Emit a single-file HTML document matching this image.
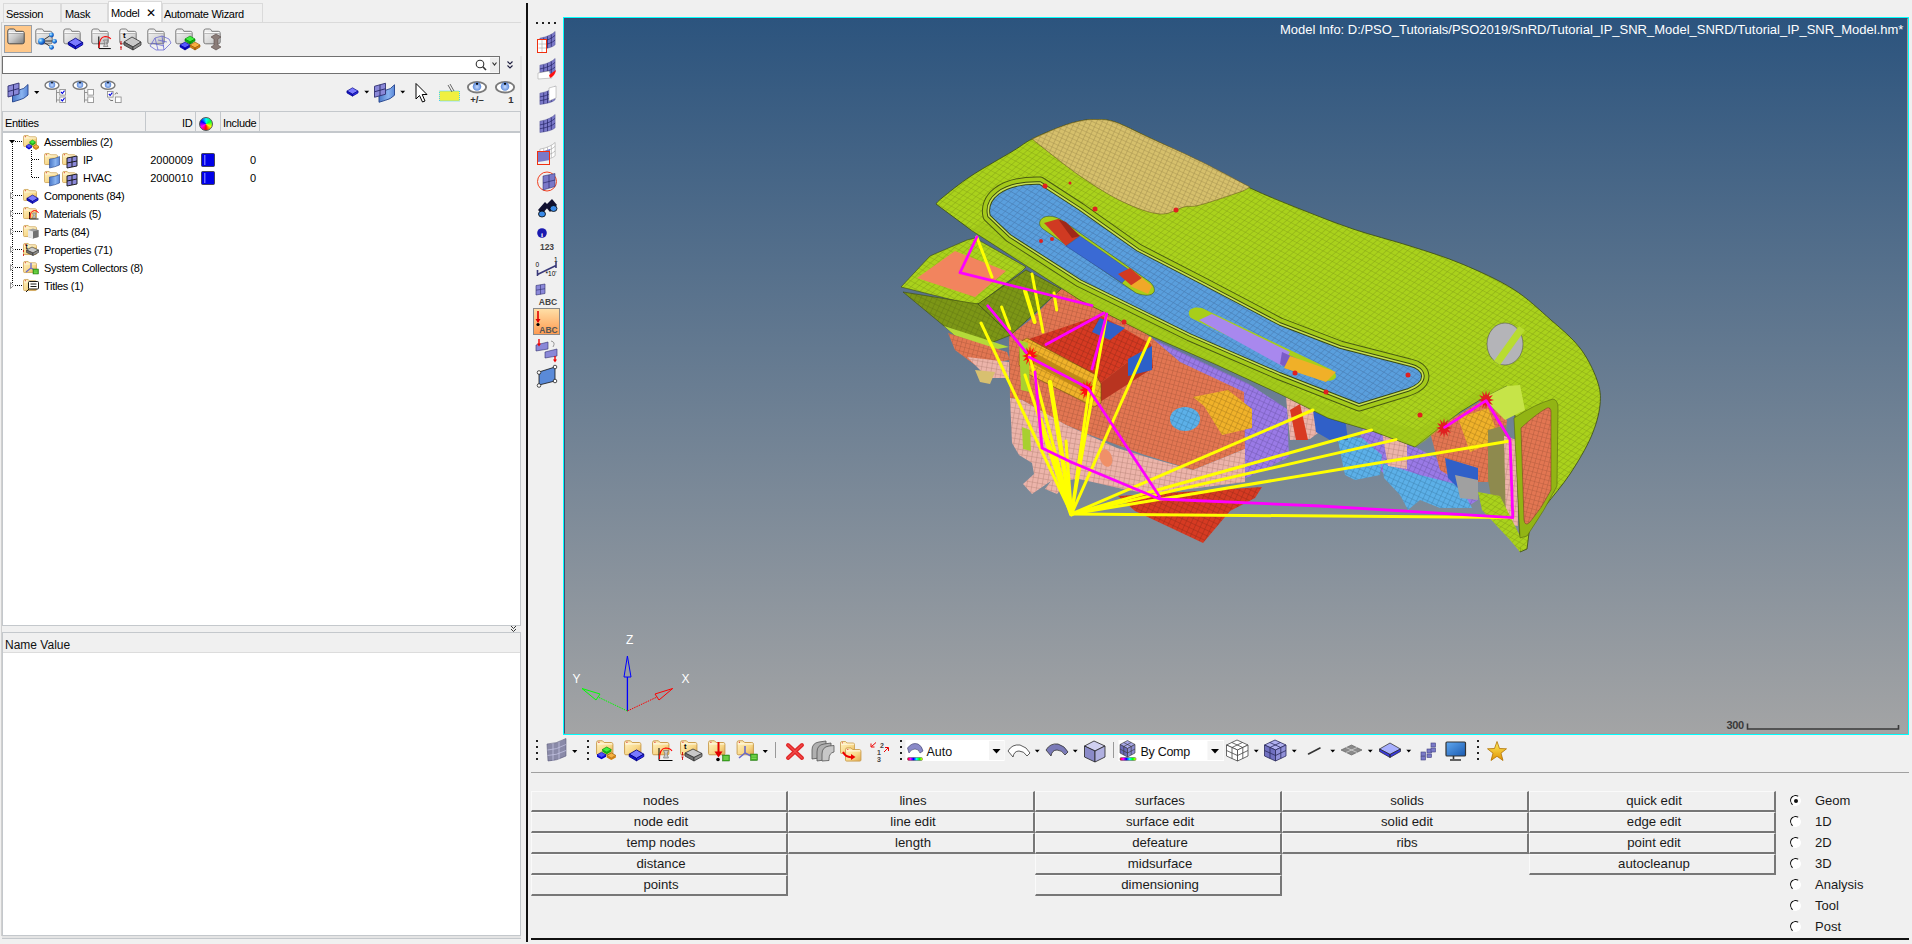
<!DOCTYPE html>
<html><head><meta charset="utf-8">
<style>
*{box-sizing:border-box;margin:0;padding:0}
html,body{width:1912px;height:944px;overflow:hidden;background:#f0f0f0;font-family:"Liberation Sans",sans-serif;font-size:11px;color:#000}
.a{position:absolute}
.tab{position:absolute;top:3px;height:19px;border:1px solid #dadada;border-bottom:none;background:#f0f0f0;font-size:11px;letter-spacing:-0.3px;padding:4px 0 0 5px;line-height:13px;white-space:nowrap;color:#000}
.t{position:absolute;font-size:11px;line-height:13px;white-space:nowrap;letter-spacing:-0.3px;color:#000}
.n{position:absolute;font-size:11px;line-height:13px;white-space:nowrap;color:#000;text-align:right}
.btn{position:absolute;height:21px;background:#f0f0f0;border-top:1px solid #fafafa;border-left:1px solid #fafafa;border-right:2px solid #777;border-bottom:2px solid #777;text-align:center;font-size:13.2px;line-height:17px;color:#1a1a1a;white-space:nowrap;padding-left:4px}
.rad{position:absolute;left:1790px;width:11px;height:11px;border-radius:50%;background:#fff;border:1.5px solid #fff;border-left-color:#111;border-top-color:#111;transform:rotate(-10deg)}
.rl{position:absolute;left:1815px;font-size:13px;line-height:16px;color:#1a1a1a}
</style></head><body>
<div class="tab" style="left:3px;width:58px;padding-left:2px">Session</div>
<div class="tab" style="left:61px;width:47px;padding-left:3px">Mask</div>
<div class="tab" style="left:108px;width:54px;top:1px;height:21px;background:#fff;padding-top:5px;padding-left:2px">Model <span style="margin-left:4px;font-size:12px">&#x2715;</span></div>
<div class="tab" style="left:162px;width:101px;padding-left:1px">Automate Wizard</div>
<div class="a" style="left:1px;top:22px;width:520px;height:1px;background:#dadada"></div>
<div class="a" style="left:1px;top:22px;width:1px;height:914px;background:#d0d0d0"></div>

<!-- search box -->
<div class="a" style="left:2px;top:56px;width:498px;height:18px;background:#fff;border:1px solid #707070"></div>

<!-- entity header -->
<div class="a" style="left:2px;top:111px;width:519px;height:22px;background:#f0f0f0;border:1px solid #c4c8cc;border-bottom:2px solid #c4c8cc"></div>
<div class="t" style="left:5px;top:117px">Entities</div>
<div class="a" style="left:145px;top:112px;width:1px;height:20px;background:#c4c8cc"></div>
<div class="a" style="left:195px;top:112px;width:1px;height:20px;background:#c4c8cc"></div>
<div class="a" style="left:220px;top:112px;width:1px;height:20px;background:#c4c8cc"></div>
<div class="a" style="left:259px;top:112px;width:1px;height:20px;background:#c4c8cc"></div>
<div class="t" style="left:182px;top:117px">ID</div>
<div class="t" style="left:223px;top:117px">Include</div><div class="a" style="left:199px;top:117px;width:14px;height:14px;border-radius:50%;background:conic-gradient(#00ffff,#00ff40,#ffff00,#ff0000,#ff00ff,#0000ff,#00ffff);border:1px solid #555"></div>

<div class="a" style="left:2px;top:133px;width:519px;height:492px;background:#fff;border-left:1px solid #c4c8cc;border-right:1px solid #c4c8cc"></div>
<div class="t" style="left:44px;top:136px">Assemblies (2)</div>
<div class="t" style="left:83px;top:154px">IP</div>
<div class="t" style="left:83px;top:172px">HVAC</div>
<div class="t" style="left:44px;top:190px">Components (84)</div>
<div class="t" style="left:44px;top:208px">Materials (5)</div>
<div class="t" style="left:44px;top:226px">Parts (84)</div>
<div class="t" style="left:44px;top:244px">Properties (71)</div>
<div class="t" style="left:44px;top:262px">System Collectors (8)</div>
<div class="t" style="left:44px;top:280px">Titles (1)</div>
<div class="n" style="left:140px;width:53px;top:154px">2000009</div>
<div class="n" style="left:140px;width:53px;top:172px">2000010</div>
<div class="n" style="left:230px;width:26px;top:154px">0</div>
<div class="n" style="left:230px;width:26px;top:172px">0</div>

<!-- splitter -->
<div class="a" style="left:2px;top:625px;width:519px;height:1px;background:#c4c8cc"></div>
<div class="a" style="left:2px;top:632px;width:519px;height:1px;background:#c4c8cc"></div>
<!-- name value -->
<div class="a" style="left:2px;top:633px;width:519px;height:303px;background:#fff;border:1px solid #c4c8cc;border-top:none"></div>
<div class="a" style="left:3px;top:633px;width:517px;height:20px;background:#f0f0f0;border-bottom:1px solid #dcdcdc"></div>
<div class="a" style="left:5px;top:638px;font-size:12px;line-height:14px;color:#111">Name Value</div>
<div class="a" style="left:2px;top:936px;width:519px;height:3px;background:#e4e4e4;border-bottom:1px solid #c4c8cc"></div>

<!-- divider -->
<div class="a" style="left:526px;top:3px;width:2px;height:939px;background:#111"></div>

<!-- viewport -->
<div class="a" style="left:563px;top:17px;width:1346px;height:718px;background:#00ffff"></div>
<div class="a" style="left:564px;top:18px;width:1344px;height:716px;background:linear-gradient(#2c547e,#a3a4a5);border-top:1px solid #3a4a72;border-left:1px solid #3a4a72;border-right:1px solid #a89a9a;border-bottom:1px solid #a89a9a"></div>
<div class="a" style="left:1280px;top:22px;color:#fff;font-size:13px;line-height:16px;white-space:nowrap;letter-spacing:-0.01px">Model Info: D:/PSO_Tutorials/PSO2019/SnRD/Tutorial_IP_SNR_Model_SNRD/Tutorial_IP_SNR_Model.hm*</div>
<!-- MODEL --><svg class="a" style="left:0;top:0" width="1912" height="944" viewBox="0 0 1912 944">
<defs>
<pattern id="mg" width="5" height="5" patternUnits="userSpaceOnUse" patternTransform="rotate(28) skewX(-20)"><rect width="5" height="5" fill="#aad21c"/><path d="M0 0H5M0 0V5" stroke="#86a416" stroke-width="1"/></pattern>
<pattern id="mt" width="5" height="4" patternUnits="userSpaceOnUse" patternTransform="rotate(25)"><rect width="5" height="4" fill="#d6c06c"/><path d="M0 0H5M0 0V4" stroke="#a89450" stroke-width="1.1"/></pattern>
<pattern id="mb" width="5" height="5" patternUnits="userSpaceOnUse" patternTransform="rotate(30) skewX(-15)"><rect width="5" height="5" fill="#5a9fdd"/><path d="M0 0H5M0 0V5" stroke="#4a7fb6" stroke-width="1.1"/></pattern>
<pattern id="ms" width="4.5" height="4.5" patternUnits="userSpaceOnUse" patternTransform="rotate(15)"><rect width="5" height="5" fill="#e27652"/><path d="M0 0H5M0 0V5" stroke="#b45c3e" stroke-width="1"/></pattern>
<pattern id="mp" width="5" height="5" patternUnits="userSpaceOnUse" patternTransform="rotate(10)"><rect width="5" height="5" fill="#ecb4aa"/><path d="M0 0H5M0 0V5" stroke="#b8847a" stroke-width="0.9"/></pattern>
<pattern id="mr" width="5" height="5" patternUnits="userSpaceOnUse" patternTransform="rotate(25)"><rect width="5" height="5" fill="#d63a22"/><path d="M0 0H5M0 0V5" stroke="#9a2a18" stroke-width="0.9"/></pattern>
<pattern id="mo" width="5" height="5" patternUnits="userSpaceOnUse" patternTransform="rotate(25)"><rect width="5" height="5" fill="#7c9616"/><path d="M0 0H5M0 0V5" stroke="#627812" stroke-width="0.9"/></pattern>
<pattern id="mpu" width="5" height="5" patternUnits="userSpaceOnUse" patternTransform="rotate(25)"><rect width="5" height="5" fill="#9a7ae6"/><path d="M0 0H5M0 0V5" stroke="#6c56ae" stroke-width="0.9"/></pattern>
<pattern id="my" width="5" height="5" patternUnits="userSpaceOnUse" patternTransform="rotate(25)"><rect width="5" height="5" fill="#f0b22a"/><path d="M0 0H5M0 0V5" stroke="#a87a18" stroke-width="0.9"/></pattern>
<pattern id="mlb" width="5" height="5" patternUnits="userSpaceOnUse" patternTransform="rotate(25)"><rect width="5" height="5" fill="#5cb0e8"/><path d="M0 0H5M0 0V5" stroke="#3c80b0" stroke-width="0.9"/></pattern>
<clipPath id="vp"><rect x="565" y="19" width="1343" height="715"/></clipPath>
</defs>
<g clip-path="url(#vp)" stroke-linejoin="round">
<!-- underside right band -->
<polygon points="1363,428 1415,447 1460,470 1478,500 1470,505 1430,500 1400,488 1380,470 1355,455" fill="url(#mpu)"/>
<polygon points="1382,463 1420,475 1460,485 1472,508 1440,508 1420,500 1408,510 1400,495 1384,478" fill="url(#mlb)"/>
<polygon points="1337,436 1362,438 1382,455 1380,475 1355,480 1345,475" fill="url(#mlb)"/>
<polygon points="1286,397 1318,405 1322,430 1310,439 1290,440" fill="url(#mp)"/>
<polygon points="1290,410 1300,404 1308,440 1296,440" fill="#d83a22"/>
<polygon points="1313,410 1345,418 1348,440 1330,440 1316,432" fill="#3060c8"/>
<polygon points="1382,432 1407,440 1407,469 1388,466" fill="url(#mp)"/>
<polygon points="1430,432 1483,400 1507,420 1500,482 1460,482 1440,470" fill="url(#ms)"/>
<polygon points="1458,418 1488,408 1500,440 1470,452" fill="url(#my)"/>
<polygon points="1445,458 1478,468 1478,492 1462,492 1448,478" fill="#3060c8"/>
<polygon points="1455,475 1478,480 1478,500 1460,498" fill="#a0a0a0"/>
<polygon points="1488,430 1506,425 1510,512 1494,514 1488,480" fill="#8e8a4e"/>
<polygon points="1504,436 1517,440 1518,526 1506,524" fill="url(#mp)"/>
<!-- purple -->
<polygon points="1153,339 1249,384 1287,409 1289,457 1257,473 1242,480 1244,395 1180,362" fill="url(#mpu)"/>
<!-- salmon main body -->
<polygon points="1009,336 1030,320 1061,289 1100,300 1153,339 1180,362 1244,392 1245,449 1193,470 1142,454 1090,435 1066,425 1022,400 1010,398" fill="url(#ms)"/>
<!-- pink body -->
<polygon points="1010,398 1022,400 1066,425 1117,448 1150,458 1193,470 1245,449 1245,482 1150,494 1123,489 1079,479 1068,480 1057,494 1045,489 1051,481 1032,494 1023,484 1034,474 1032,463 1019,455 1012,443" fill="url(#mp)"/>
<polygon points="1022,427 1030,430 1031,451 1023,449" fill="#a8d030"/>
<ellipse cx="1106" cy="458" rx="6" ry="9" fill="#f09068" transform="rotate(-20 1106 458)"/>
<!-- red bottom -->
<polygon points="1118,496 1262,487 1255,498 1230,511 1203,543 1135,511" fill="url(#mr)"/>
<!-- red box -->
<polygon points="1026,340 1100,315 1151,344 1097,386" fill="url(#mr)"/>
<polygon points="1097,386 1151,344 1153,368 1100,402" fill="#b83420"/>
<polygon points="1128,359 1152,346 1152,370 1128,376" fill="#2c60c8"/>
<polygon points="1100,318 1125,328 1110,340 1092,332" fill="#3060c8"/>
<polygon points="1020,342 1027,338 1096,375 1101,384 1101,403 1094,407 1024,372 1019,365" fill="url(#my)" stroke="#6a5010" stroke-width="0.6"/>
<polygon points="1030,350 1092,384 1092,396 1030,362" fill="#c08818"/>
<polygon points="1019,340 1028,343 1030,392 1021,390" fill="#a8d030"/>


<polygon points="1038.0,356.0 1033.9,357.3 1036.9,361.0 1032.8,359.5 1034.0,364.7 1031.0,360.8 1030.0,366.0 1029.0,360.8 1026.0,364.7 1027.2,359.5 1023.1,361.0 1026.1,357.3 1022.0,356.0 1026.1,354.7 1023.1,351.0 1027.2,352.5 1026.0,347.3 1029.0,351.2 1030.0,346.0 1031.0,351.2 1034.0,347.3 1032.8,352.5 1036.9,351.0 1033.9,354.7" fill="#ff1010"/><polygon points="1095.0,390.0 1090.9,391.3 1093.9,395.0 1089.8,393.5 1091.0,398.7 1088.0,394.8 1087.0,400.0 1086.0,394.8 1083.0,398.7 1084.2,393.5 1080.1,395.0 1083.1,391.3 1079.0,390.0 1083.1,388.7 1080.1,385.0 1084.2,386.5 1083.0,381.3 1086.0,385.2 1087.0,380.0 1088.0,385.2 1091.0,381.3 1089.8,386.5 1093.9,385.0 1090.9,388.7" fill="#ff1010"/>
<!-- cylinder & orange block -->
<polygon points="1193,397 1228,390 1252,409 1252,428 1222,435 1204,406" fill="url(#my)"/>
<ellipse cx="1185" cy="419" rx="15" ry="12" fill="url(#mlb)"/>
<!-- left duct -->
<polygon points="901,287 930,256 967,240 975,238 1026,267 1022,271 980,303 973,305" fill="url(#mg)" stroke="#3a4a10" stroke-width="0.6"/>
<polygon points="917,278 955,251 1006,271 975,297" fill="#f2845e"/>
<polygon points="903,292 978,304 1011,335 973,350 944,326" fill="url(#mo)" stroke="#3a4a10" stroke-width="0.6"/>
<polygon points="978,304 1026,270 1061,289 1014,332 1011,335" fill="url(#mo)" stroke="#3a4a10" stroke-width="0.6"/>
<polygon points="944,326 1009,347 975,353" fill="#b4da3a"/>
<polygon points="948,333 1007,352 1010,360 975,365 955,350" fill="url(#ms)"/>
<polygon points="967,357 1009,362 1009,378 988,378" fill="url(#mp)"/>
<polygon points="975,370 995,372 990,384 980,382" fill="#d8c070"/>
<!-- dashboard main green -->
<path d="M936.0,204.0 C937.0,203.0 936.2,202.7 942.0,198.0 C947.8,193.3 959.2,183.8 971.0,176.0 C982.8,168.2 1002.8,157.2 1013.0,151.0 C1023.2,144.8 1024.2,143.0 1032.0,139.0 C1039.8,135.0 1052.0,130.0 1060.0,127.0 C1068.0,124.0 1074.2,122.2 1080.0,121.0 C1085.8,119.8 1089.2,119.3 1095.0,119.5 C1100.8,119.7 1105.8,118.9 1115.0,122.0 C1124.2,125.1 1135.8,131.3 1150.0,138.0 C1164.2,144.7 1183.3,153.7 1200.0,162.0 C1216.7,170.3 1233.3,180.2 1250.0,188.0 C1266.7,195.8 1282.8,202.2 1300.0,209.0 C1317.2,215.8 1334.7,222.8 1353.0,229.0 C1371.3,235.2 1391.8,240.2 1410.0,246.0 C1428.2,251.8 1444.8,256.8 1462.0,264.0 C1479.2,271.2 1498.2,279.7 1513.0,289.0 C1527.8,298.3 1539.8,310.2 1551.0,320.0 C1562.2,329.8 1572.3,338.0 1580.0,348.0 C1587.7,358.0 1593.7,370.5 1597.0,380.0 C1600.3,389.5 1601.0,395.5 1600.0,405.0 C1599.0,414.5 1596.0,425.5 1591.0,437.0 C1586.0,448.5 1577.5,462.7 1570.0,474.0 C1562.5,485.3 1552.7,496.5 1546.0,505.0 C1539.3,513.5 1532.7,521.7 1530.0,525.0 L1527,549 L1520,552 L1516,420 L1507,386 L1483,398 L1460,412 L1439,428 L1415,447 L1375,432 L1328,418 L1280,394 L1215,364 L1149,335 L1080,300 L971,230 L940,207 Z" fill="url(#mg)" stroke="#3a4a10" stroke-width="0.8"/>
<polygon points="1478,492 1500,496 1522,540 1520,552 1510,540 1482,510" fill="url(#mg)"/>
<!-- front strip shading -->
<polygon points="971,230 1080,300 1149,335 1215,364 1280,394 1328,418 1375,432 1415,447 1425,441 1460,412 1483,398 1507,386 1478,392 1450,412 1418,430 1380,420 1330,405 1284,384 1218,352 1152,322 1084,286 980,222" fill="#9cc218" opacity="0.5"/>
<!-- end cap inner -->
<path d="M1514,418 Q1535,404 1553,399 Q1558,400 1558,408 L1557,486 Q1545,510 1527,536 L1520,538 Z" fill="#92b414" stroke="#4a5a10" stroke-width="0.5"/>
<path d="M1521,428 Q1536,414 1547,408 Q1551,407 1551,412 L1551,490 Q1542,508 1530,522 Q1525,527 1524,520 Z" fill="url(#ms)" stroke="#6a3a20" stroke-width="0.5"/>
<!-- bracket near end cap -->
<polygon points="1483,398 1507,386 1520,385 1525,410 1505,420" fill="#c6e448"/>
<!-- tan -->
<path d="M1032.0,139.0 C1036.7,137.0 1052.0,130.0 1060.0,127.0 C1068.0,124.0 1074.2,122.2 1080.0,121.0 C1085.8,119.8 1089.2,119.3 1095.0,119.5 C1100.8,119.7 1105.8,118.9 1115.0,122.0 C1124.2,125.1 1135.8,131.5 1150.0,138.0 C1164.2,144.5 1183.3,152.8 1200.0,161.0 C1216.7,169.2 1241.7,182.7 1250.0,187.0  C1248.3,187.8 1248.3,189.0 1240.0,192.0 C1231.7,195.0 1209.3,202.5 1200.0,205.0 C1190.7,207.5 1190.7,205.5 1184.0,207.0 C1177.3,208.5 1170.2,214.8 1160.0,214.0 C1149.8,213.2 1136.3,208.3 1123.0,202.0 C1109.7,195.7 1095.2,186.5 1080.0,176.0 C1064.8,165.5 1040.0,145.2 1032.0,139.0 Z" fill="url(#mt)" stroke="#6a5a20" stroke-width="0.6"/>
<!-- blue strip -->
<path d="M989,216 C985,200 1000,182 1040,183 L1080,209 L1138,250 L1204,284 L1280,324 L1340,347 L1410,365 C1425,368 1430,382 1408,390 L1359,405 L1280,374 L1190,335 L1135,308 L1080,281 L1010,236 Z" fill="none" stroke="#4a5c12" stroke-width="13" stroke-linejoin="round"/><path d="M989,216 C985,200 1000,182 1040,183 L1080,209 L1138,250 L1204,284 L1280,324 L1340,347 L1410,365 C1425,368 1430,382 1408,390 L1359,405 L1280,374 L1190,335 L1135,308 L1080,281 L1010,236 Z" fill="none" stroke="#a4ca1a" stroke-width="11" stroke-linejoin="round"/><path d="M989,216 C985,200 1000,182 1040,183 L1080,209 L1138,250 L1204,284 L1280,324 L1340,347 L1410,365 C1425,368 1430,382 1408,390 L1359,405 L1280,374 L1190,335 L1135,308 L1080,281 L1010,236 Z" fill="url(#mb)" stroke="#3a4a10" stroke-width="3.5"/><path d="M989,216 C985,200 1000,182 1040,183 L1080,209 L1138,250 L1204,284 L1280,324 L1340,347 L1410,365 C1425,368 1430,382 1408,390 L1359,405 L1280,374 L1190,335 L1135,308 L1080,281 L1010,236 Z" fill="none" stroke="#c8e050" stroke-width="1.6"/>
<!-- slots -->
<path d="M1043,229 C1034,222 1044,211 1060,219 L1150,282 C1160,292 1152,299 1136,293 Z" fill="#a8ce1a" stroke="#3a4a10" stroke-width="0.5"/>
<polygon points="1044,223 1058,219 1080,236 1066,246" fill="#d03a22"/>
<polygon points="1058,219 1066,222 1080,236 1072,238" fill="#a02818"/>
<polygon points="1066,246 1080,236 1132,272 1122,283" fill="#3a6ad4" stroke="#2a4a9a" stroke-width="0.5"/>
<polygon points="1118,274 1130,268 1142,278 1132,286" fill="#d03a22"/>
<polygon points="1130,286 1142,278 1152,286 1148,294" fill="#f0a828"/>
<path d="M1191,318 C1184,310 1195,304 1206,310 L1332,370 C1342,378 1332,384 1318,379 Z" fill="#a8ce1a"/>
<polygon points="1199,320 1212,314 1290,352 1282,366" fill="#a888ee"/>
<polygon points="1282,352 1300,360 1296,372 1280,364" fill="#7a5cc8"/>
<polygon points="1290,356 1336,372 1326,382 1284,368" fill="#f0b028"/>
<!-- gray knob -->
<ellipse cx="1505" cy="344" rx="18" ry="21" fill="#b4b4b8" stroke="#555" stroke-width="0.6"/>
<polygon points="1519,326 1525,330 1500,365 1494,361" fill="#b8dc30"/>
<!-- red markers -->
<g fill="#e02020">
<circle cx="1045" cy="186" r="2.5"/><circle cx="1070" cy="183" r="1.5"/><circle cx="1095" cy="209" r="2.5"/><circle cx="1176" cy="210" r="2.5"/><circle cx="1052" cy="239" r="2"/><circle cx="1041" cy="241" r="2"/>
<circle cx="1295" cy="373" r="2.5"/><circle cx="1408" cy="375" r="2.5"/><circle cx="1326" cy="392" r="2.5"/><circle cx="1124" cy="322" r="2.5"/><circle cx="1420" cy="415" r="2.5"/>

<polygon points="1452.0,428.0 1447.9,429.3 1450.9,433.0 1446.8,431.5 1448.0,436.7 1445.0,432.8 1444.0,438.0 1443.0,432.8 1440.0,436.7 1441.2,431.5 1437.1,433.0 1440.1,429.3 1436.0,428.0 1440.1,426.7 1437.1,423.0 1441.2,424.5 1440.0,419.3 1443.0,423.2 1444.0,418.0 1445.0,423.2 1448.0,419.3 1446.8,424.5 1450.9,423.0 1447.9,426.7"/><polygon points="1494.0,400.0 1489.9,401.3 1492.9,405.0 1488.8,403.5 1490.0,408.7 1487.0,404.8 1486.0,410.0 1485.0,404.8 1482.0,408.7 1483.2,403.5 1479.1,405.0 1482.1,401.3 1478.0,400.0 1482.1,398.7 1479.1,395.0 1483.2,396.5 1482.0,391.3 1485.0,395.2 1486.0,390.0 1487.0,395.2 1490.0,391.3 1488.8,396.5 1492.9,395.0 1489.9,398.7"/></g>
<!-- lines -->
<g stroke="#ffff00" stroke-width="3" stroke-linecap="round">
<line x1="1071.5" y1="514" x2="981" y2="323"/>
<line x1="1071.5" y1="514" x2="1025" y2="375"/>
<line x1="1071.5" y1="514" x2="1029.5" y2="356"/>
<line x1="1071.5" y1="514" x2="1050" y2="382"/>
<line x1="1071.5" y1="514" x2="1088.8" y2="391.6"/>
<line x1="1071.5" y1="514" x2="1150" y2="338"/>
<line x1="1071.5" y1="514" x2="1313" y2="410"/>
<line x1="1071.5" y1="514" x2="1371.5" y2="430"/>
<line x1="1071.5" y1="514" x2="1396" y2="439.6"/>
<line x1="1071.5" y1="514" x2="1510" y2="441"/>
<line x1="1071.5" y1="514" x2="1512.8" y2="517.6"/>
<line x1="976.8" y1="237" x2="992" y2="277"/>
<line x1="1032" y1="274" x2="1043" y2="332"/>
<line x1="1025" y1="290.6" x2="1034.6" y2="322" stroke-width="4"/>
<line x1="1001.6" y1="307" x2="1009.8" y2="329"/>
<line x1="1054" y1="293" x2="1056.7" y2="310"/>
<line x1="1071.5" y1="514" x2="1106" y2="318"/><line x1="1071.5" y1="514" x2="1050" y2="382" stroke-width="4.5"/><line x1="1066" y1="441" x2="1071.5" y2="514"/><line x1="1071.5" y1="514" x2="1040" y2="420" stroke-width="5"/>
</g>
<g stroke="#ff00ff" stroke-width="2.8" stroke-linecap="round" fill="none">
<polyline points="976.8,237 960,272.7 1092,305.5"/>
<line x1="987.8" y1="305.8" x2="1026.4" y2="352.6"/>
<line x1="1046" y1="344.5" x2="1104" y2="313"/>
<line x1="1092" y1="369" x2="1106.8" y2="314"/>
<polyline points="1029,357 1088,388 1159.5,496.4"/>
<polyline points="1035,372 1042,448 1071,462 1159.5,499 1320,506 1512.8,517.6 1510,439.6 1486,400.6 1444.6,427.4"/>
</g>
</g>
</svg>
<!-- /MODEL -->

<!-- bottom separator -->
<div class="a" style="left:531px;top:772px;width:1378px;height:1px;background:#a0a0a0"></div>
<div class="a" style="left:531px;top:938px;width:1378px;height:2px;background:#111"></div>

<!-- buttons -->
<div class="btn" style="left:531px;top:791px;width:257px">nodes</div>
<div class="btn" style="left:531px;top:812px;width:257px">node edit</div>
<div class="btn" style="left:531px;top:833px;width:257px">temp nodes</div>
<div class="btn" style="left:531px;top:854px;width:257px">distance</div>
<div class="btn" style="left:531px;top:875px;width:257px">points</div>
<div class="btn" style="left:788px;top:791px;width:247px">lines</div>
<div class="btn" style="left:788px;top:812px;width:247px">line edit</div>
<div class="btn" style="left:788px;top:833px;width:247px">length</div>
<div class="btn" style="left:1035px;top:791px;width:247px">surfaces</div>
<div class="btn" style="left:1035px;top:812px;width:247px">surface edit</div>
<div class="btn" style="left:1035px;top:833px;width:247px">defeature</div>
<div class="btn" style="left:1035px;top:854px;width:247px">midsurface</div>
<div class="btn" style="left:1035px;top:875px;width:247px">dimensioning</div>
<div class="btn" style="left:1282px;top:791px;width:247px">solids</div>
<div class="btn" style="left:1282px;top:812px;width:247px">solid edit</div>
<div class="btn" style="left:1282px;top:833px;width:247px">ribs</div>
<div class="btn" style="left:1529px;top:791px;width:247px">quick edit</div>
<div class="btn" style="left:1529px;top:812px;width:247px">edge edit</div>
<div class="btn" style="left:1529px;top:833px;width:247px">point edit</div>
<div class="btn" style="left:1529px;top:854px;width:247px">autocleanup</div>

<div class="rad" style="top:795px"></div><div class="rl" style="top:793px">Geom</div>
<div class="a" style="left:1793.5px;top:798.5px;width:4px;height:4px;border-radius:50%;background:#111"></div>
<div class="rad" style="top:816px"></div><div class="rl" style="top:814px">1D</div>
<div class="rad" style="top:837px"></div><div class="rl" style="top:835px">2D</div>
<div class="rad" style="top:858px"></div><div class="rl" style="top:856px">3D</div>
<div class="rad" style="top:879px"></div><div class="rl" style="top:877px">Analysis</div>
<div class="rad" style="top:900px"></div><div class="rl" style="top:898px">Tool</div>
<div class="rad" style="top:921px"></div><div class="rl" style="top:919px">Post</div>

<!-- ICONS --><svg class="a" style="left:0;top:0;pointer-events:none" width="1912" height="944" viewBox="0 0 1912 944">
<defs>
<linearGradient id="gfold" x1="0" y1="0" x2="1" y2="1"><stop offset="0" stop-color="#f4f4f4"/><stop offset="0.5" stop-color="#c8c8c8"/><stop offset="1" stop-color="#7a7a7a"/></linearGradient>
<linearGradient id="yfold" x1="0" y1="0" x2="1" y2="1"><stop offset="0" stop-color="#fff4c8"/><stop offset="0.6" stop-color="#f8d888"/><stop offset="1" stop-color="#e0a850"/></linearGradient>
<linearGradient id="gflag" x1="0" y1="0" x2="1" y2="0"><stop offset="0" stop-color="#4a78c8"/><stop offset="0.6" stop-color="#8ab4f0"/><stop offset="1" stop-color="#5a88d8"/></linearGradient>
<radialGradient id="gsph" cx="0.35" cy="0.35" r="0.7"><stop offset="0" stop-color="#c8f0ff"/><stop offset="0.5" stop-color="#2a8ae8"/><stop offset="1" stop-color="#0a3aa0"/></radialGradient>
<radialGradient id="geye" cx="0.5" cy="0.55" r="0.5"><stop offset="0" stop-color="#c8dcff"/><stop offset="1" stop-color="#5a88d8"/></radialGradient>
<symbol id="fg" viewBox="0 0 18 16" overflow="visible"><path d="M0.8,3 Q0.8,1 2.8,1 H6.5 Q7.8,1 8.3,2.2 L8.8,3.3 H15.3 Q17.2,3.3 17.2,5.2 V14 Q17.2,15.8 15.3,15.8 H2.7 Q0.8,15.8 0.8,14 Z" fill="url(#gfold)" stroke="#4a4a4a" stroke-width="1"/><path d="M1.5,4.6 H16.5" stroke="#fafafa" stroke-width="1"/><path d="M1.5,5.5 H16.5" stroke="#888" stroke-width="0.6"/></symbol>
<symbol id="fgl" viewBox="0 0 18 16" overflow="visible"><path d="M0.8,3 Q0.8,1 2.8,1 H6.5 Q7.8,1 8.3,2.2 L8.8,3.3 H15.3 Q17.2,3.3 17.2,5.2 V14 Q17.2,15.8 15.3,15.8 H2.7 Q0.8,15.8 0.8,14 Z" fill="url(#gfoldl)" stroke="#7a7a7a" stroke-width="1"/><path d="M1.5,4.6 H16.5" stroke="#fcfcfc" stroke-width="1"/><path d="M1.5,5.5 H16.5" stroke="#9a9a9a" stroke-width="0.6"/></symbol><linearGradient id="gfoldl" x1="0" y1="0" x2="1" y2="1"><stop offset="0" stop-color="#f8f8f8"/><stop offset="0.6" stop-color="#d8d8d8"/><stop offset="1" stop-color="#b4b4b4"/></linearGradient>
<symbol id="fy" viewBox="0 0 15 13" overflow="visible"><path d="M0.5,2 Q0.5,0.5 2,0.5 H5.5 L7,2 H13 Q14.5,2 14.5,3.5 V11.5 Q14.5,12.5 13.5,12.5 H1.5 Q0.5,12.5 0.5,11.5 Z" fill="url(#yfold)" stroke="#c89a48" stroke-width="0.8"/><path d="M1,3.2 H14" stroke="#fffbe8" stroke-width="0.9"/><circle cx="2.5" cy="1.8" r="0.6" fill="#e04040"/></symbol>
<symbol id="bbox" viewBox="0 0 14 10" overflow="visible"><path d="M1,4.5 L7,1 L13,4.5 L7,8 Z" fill="#7a7aff" stroke="#000080" stroke-width="0.7"/><path d="M1,4.5 V6.5 L7,10 V8 Z" fill="#1010d0" stroke="#000080" stroke-width="0.7"/><path d="M13,4.5 V6.5 L7,10 V8 Z" fill="#2a2af0" stroke="#000080" stroke-width="0.7"/></symbol>
<symbol id="comp" viewBox="0 0 22 22" overflow="visible"><path d="M5.5,21.5 V11 L12,9.5 Q17,9 21,4 V14.5 Q17,18.5 12,19.5 L5.5,21.5 Z" fill="url(#gflag)" stroke="#20408a" stroke-width="0.9"/><path d="M1,5.5 L12,2.5 V13.5 L1,16.5 Z" fill="#8a88d8" stroke="#303070" stroke-width="0.9"/><path d="M6.5,4 V15 M1,11 L12,8" stroke="#303070" stroke-width="1"/></symbol>
<symbol id="eye" viewBox="0 0 16 10" overflow="visible"><ellipse cx="8" cy="5" rx="7.3" ry="4.2" fill="#fff" stroke="#7a7a7a" stroke-width="1.5"/><circle cx="8" cy="4.4" r="3.4" fill="url(#geye)"/><circle cx="8" cy="2.2" r="0.9" fill="#000"/></symbol>
<symbol id="mesh" viewBox="0 0 20 20" overflow="visible"><path d="M2,7 Q8,6 12,4 Q16,2 18,0 V14 Q16,16 12,17 Q8,18 2,19 Z" fill="#7a78c8" stroke="#505090" stroke-width="0.5"/><path d="M2,11 Q8,10 12,8 Q16,6 18,4 M2,15 Q8,14 12,12.5 Q16,11 18,9 M6,6.5 V18.5 M10,5 V17.5 M14,3 V16" stroke="#202060" stroke-width="0.7" fill="none"/></symbol>
<symbol id="meshw" viewBox="0 0 20 20" overflow="visible"><path d="M2,7 Q8,6 12,4 Q16,2 18,0 V14 Q16,16 12,17 Q8,18 2,19 Z" fill="#fff" stroke="#888" stroke-width="0.5"/><path d="M2,11 Q8,10 12,8 Q16,6 18,4 M2,15 Q8,14 12,12.5 Q16,11 18,9 M6,6.5 V18.5 M10,5 V17.5 M14,3 V16" stroke="#999" stroke-width="0.6" fill="none"/></symbol>
<symbol id="tri" viewBox="0 0 6 4"><path d="M0,0 H6 L3,3.5 Z" fill="#000"/></symbol>
</defs>

<!-- TOOLBAR 1 -->
<rect x="4.5" y="25.5" width="27" height="27" fill="#ffc88a" stroke="#9aa0a8"/>
<use href="#fg" x="7" y="28" width="18" height="16"/>
<use href="#fgl" x="35" y="28" width="18" height="16"/>
<g><line x1="42" y1="41" x2="51" y2="35" stroke="#222" stroke-width="0.9"/><line x1="42" y1="41" x2="54" y2="41" stroke="#222" stroke-width="0.9"/><line x1="42" y1="41" x2="51" y2="47" stroke="#222" stroke-width="0.9"/><circle cx="41.5" cy="41.3" r="3.4" fill="url(#gsph)"/><circle cx="51.5" cy="35" r="2.4" fill="url(#gsph)"/><circle cx="54.6" cy="41.3" r="2.4" fill="url(#gsph)"/><circle cx="51.5" cy="47.3" r="2.4" fill="url(#gsph)"/></g>
<use href="#fgl" x="63" y="28" width="18" height="16"/>
<use href="#bbox" x="67" y="37" width="17" height="12"/>
<use href="#fgl" x="91" y="28" width="18" height="16"/>
<g fill="none"><path d="M98.8,48 V36.5 M98.8,48.6 H110.8" stroke="#000" stroke-width="1"/><path d="M99,48 Q99,37 105,36.5 Q109,36.5 110.8,39" stroke="#f00" stroke-width="1.1"/><path d="M103.5,40 H108 L106.5,43 L108,46.5 H103.5 L105,43 Z" fill="#c8c8c8" stroke="#666" stroke-width="0.6"/></g>
<use href="#fgl" x="119" y="28" width="18" height="16"/>
<g><path d="M124,42 L132,37 L141,42 L133,47 Z" fill="#c8c8c8" stroke="#333" stroke-width="0.8"/><path d="M124,42 V45 L133,50 V47 Z" fill="#707070" stroke="#333" stroke-width="0.8"/><path d="M141,42 V45 L133,50 V47 Z" fill="#909090" stroke="#333" stroke-width="0.8"/><text x="123" y="38" font-size="8" font-weight="bold" font-family="Liberation Sans">t</text><path d="M121,41 V44 M120,44 H122 M121,47 V50 M120,47 H122" stroke="#c00" stroke-width="0.9"/></g>
<use href="#fgl" x="147" y="28" width="18" height="16"/>
<g fill="none" stroke="#5a5ad0" stroke-width="0.7"><path d="M150,46 L155,38 L162,36 L169,39 L171,43 L164,50 L156,50 Z"/><path d="M152,43 L164,46 M155,38 L158,50 M162,36 L164,50 M158,40 L167,42"/></g>
<use href="#fgl" x="175" y="28" width="18" height="16"/>
<g><path d="M180,45 L185,42 L190,45 L185,48 Z" fill="#5858ff" stroke="#000090" stroke-width="0.6"/><path d="M180,45 V47 L185,50 V48 Z M190,45 V47 L185,50 V48Z" fill="#0000d0" stroke="#000090" stroke-width="0.6"/><path d="M185,39 L190,36 L195,39 L190,42 Z" fill="#40f040" stroke="#008000" stroke-width="0.6"/><path d="M185,39 V41 L190,44 V42 Z M195,39 V41 L190,44 V42Z" fill="#10b010" stroke="#008000" stroke-width="0.6"/><path d="M190,45 L195,42 L200,45 L195,48 Z" fill="#f8b040" stroke="#905000" stroke-width="0.6"/><path d="M190,45 V47 L195,50 V48 Z M200,45 V47 L195,50 V48Z" fill="#d88010" stroke="#905000" stroke-width="0.6"/></g>
<use href="#fgl" x="203" y="28" width="18" height="16"/>
<path d="M211,37 L216,34 L221,37 L218,39 V45 L221,47 L216,50 L211,47 L214,45 V39 Z" fill="#8a7c78" stroke="#5a4c48" stroke-width="0.6"/>

<!-- search -->
<rect x="490" y="57.5" width="9" height="15" fill="#ededed"/>
<circle cx="480" cy="64" r="3.8" fill="none" stroke="#333" stroke-width="1.1"/><line x1="482.8" y1="66.8" x2="486" y2="70" stroke="#333" stroke-width="1.6"/>
<path d="M492.5,62.5 L494.5,65 L496.5,62.5" fill="none" stroke="#333" stroke-width="1.2"/>
<path d="M507.5,61.5 L510,64 L512.5,61.5 M507.5,65.5 L510,68 L512.5,65.5" fill="none" stroke="#202040" stroke-width="1.1"/>
<rect x="520.5" y="56" width="1" height="55" fill="#d8d8d8"/>

<!-- TOOLBAR 2 -->
<use href="#comp" x="7" y="80" width="22" height="23"/>
<use href="#tri" x="34" y="91" width="5.5" height="3.5"/>
<g transform="translate(44,80.5)"><use href="#eye" width="16" height="9.5"/><path d="M12.5,9 V22 M12.5,12 H15.5 M12.5,19.5 H15.5" stroke="#888" stroke-width="0.9"/><rect x="15.8" y="9" width="5.6" height="5.6" fill="#fff" stroke="#888" stroke-width="0.8"/><rect x="15.8" y="16.5" width="5.6" height="5.6" fill="#fff" stroke="#888" stroke-width="0.8"/><path d="M17,11.5 L18.4,13 L20.5,10.2 M17,19 L18.4,20.5 L20.5,17.7" stroke="#0000e0" stroke-width="1.1" fill="none"/></g>
<g transform="translate(72,80.5)"><use href="#eye" width="16" height="9.5"/><path d="M12.5,9 V22 M12.5,12 H15.5 M12.5,19.5 H15.5" stroke="#888" stroke-width="0.9"/><rect x="15.8" y="9" width="5.6" height="5.6" fill="#fff" stroke="#888" stroke-width="0.8"/><rect x="15.8" y="16.5" width="5.6" height="5.6" fill="#fff" stroke="#888" stroke-width="0.8"/></g>
<g transform="translate(100,80.5)"><use href="#eye" width="16" height="9.5"/><rect x="7.5" y="11" width="5.6" height="5.6" fill="#fff" stroke="#888" stroke-width="0.8"/><rect x="15.5" y="16.5" width="5.6" height="5.6" fill="#fff" stroke="#888" stroke-width="0.8"/><path d="M8.8,13.5 L10.2,15 L12.3,12.2" stroke="#0000e0" stroke-width="1.1" fill="none"/><path d="M15,14 Q16,11 18,13 M9,18 Q10,21 13,20" stroke="#777" stroke-width="1" fill="none"/></g>
<use href="#bbox" x="346" y="86.5" width="13" height="10"/>
<use href="#tri" x="364" y="90.5" width="5.5" height="3.5"/>
<use href="#comp" x="373.5" y="80.5" width="22" height="22.5"/>
<use href="#tri" x="400" y="90.5" width="5.5" height="3.5"/>
<path d="M416,83.5 V99 L419.5,95.5 L422.5,102 L425,101 L422.2,94.5 L427,94.5 Z" fill="#fff" stroke="#000" stroke-width="1"/>
<rect x="439.5" y="91" width="20" height="10" fill="#f0f040" stroke="#40d0f0" stroke-width="1" stroke-dasharray="1,1"/>
<path d="M448,85 L452,92 M450,84 L454,91" stroke="#444" stroke-width="0.8"/>
<use href="#eye" x="466" y="81" width="22" height="12.5"/>
<text x="477" y="102.5" font-size="9.5" font-weight="bold" text-anchor="middle" font-family="Liberation Sans" fill="#333">+/–</text>
<use href="#eye" x="494" y="81" width="22" height="12.5"/>
<text x="511" y="102.5" font-size="9.5" font-weight="bold" text-anchor="middle" font-family="Liberation Sans" fill="#333">1</text>



<!-- TREE -->
<g stroke="#000" stroke-width="1" stroke-dasharray="1,1" fill="none">
<path d="M12.5,144 V286"/>
<path d="M15,141.5 H22 M15,195.5 H22 M15,213.5 H22 M15,231.5 H22 M15,249.5 H22 M15,267.5 H22 M15,285.5 H22"/>
<path d="M31.5,150 V177.5 M32,159.5 H40 M32,177.5 H40"/>
</g>
<path d="M9,140 H15 L12,143.5 Z" fill="#000"/>
<g fill="#fff" stroke="#777" stroke-width="0.8">
<path d="M10.5,192.5 L13.5,195.5 L10.5,198.5 Z"/><path d="M10.5,210.5 L13.5,213.5 L10.5,216.5 Z"/><path d="M10.5,228.5 L13.5,231.5 L10.5,234.5 Z"/><path d="M10.5,246.5 L13.5,249.5 L10.5,252.5 Z"/><path d="M10.5,264.5 L13.5,267.5 L10.5,270.5 Z"/><path d="M10.5,282.5 L13.5,285.5 L10.5,288.5 Z"/>
</g>
<use href="#fy" x="23" y="135" width="14" height="12"/>
<g><path d="M26,146 L29,144 L32,146 L29,148 Z" fill="#5050ff" stroke="#000090" stroke-width="0.5"/><path d="M26,146 V147.5 L29,149.5 V148 Z M32,146 V147.5 L29,149.5 V148Z" fill="#0000d0"/><path d="M29.5,142 L32.5,140 L35.5,142 L32.5,144 Z" fill="#40f040" stroke="#008000" stroke-width="0.5"/><path d="M29.5,142 V143.5 L32.5,145.5 V144 Z M35.5,142 V143.5 L32.5,145.5 V144Z" fill="#10b010"/><path d="M33,146.5 L36,144.5 L39,146.5 L36,148.5 Z" fill="#f8b040" stroke="#905000" stroke-width="0.5"/><path d="M33,146.5 V148 L36,150 V148.5 Z M39,146.5 V148 L36,150 V148.5Z" fill="#d08010"/></g>
<use href="#fy" x="44" y="153" width="14" height="12"/>
<path d="M49.5,159 Q55,159 59.5,156.5 V165 Q55,167 49.5,168 Z" fill="url(#gflag)" stroke="#20408a" stroke-width="0.6"/>
<use href="#fy" x="62" y="153" width="14" height="12"/>
<g><path d="M67,158 L77,156 V166 L67,168 Z" fill="#8a88d8" stroke="#111" stroke-width="0.9"/><path d="M72,157 V167 M67,163 L77,161" stroke="#111" stroke-width="0.9"/></g>
<use href="#fy" x="44" y="171" width="14" height="12"/>
<path d="M49.5,177 Q55,177 59.5,174.5 V183 Q55,185 49.5,186 Z" fill="url(#gflag)" stroke="#20408a" stroke-width="0.6"/>
<use href="#fy" x="62" y="171" width="14" height="12"/>
<g><path d="M67,176 L77,174 V184 L67,186 Z" fill="#8a88d8" stroke="#111" stroke-width="0.9"/><path d="M72,175 V185 M67,181 L77,179" stroke="#111" stroke-width="0.9"/></g>
<g><rect x="201.5" y="153.5" width="13" height="13" rx="1" fill="#0000e8" stroke="#333" stroke-width="0.8"/><rect x="204" y="155" width="1.5" height="10" fill="#6a6aff"/></g>
<g><rect x="201.5" y="171.5" width="13" height="13" rx="1" fill="#0000e8" stroke="#333" stroke-width="0.8"/><rect x="204" y="173" width="1.5" height="10" fill="#6a6aff"/></g>
<use href="#fy" x="23" y="189" width="14" height="12"/>
<use href="#bbox" x="26" y="194" width="13" height="9.5"/>
<use href="#fy" x="23" y="207" width="14" height="12"/>
<g fill="none"><path d="M29.5,219 V212 M29.5,219 H38.5" stroke="#000" stroke-width="0.9"/><path d="M30,218 Q30,211 34.5,210.5 Q37.5,210.5 38.5,213" stroke="#f00" stroke-width="1"/><path d="M32.5,213 H36 L35,215.5 L36,218 H32.5 L33.5,215.5 Z" fill="#c8c8c8" stroke="#666" stroke-width="0.5"/></g>
<use href="#fy" x="23" y="225" width="14" height="12"/>
<g><path d="M28,230 L33,228.5 L38.5,230 V237 L33,238.5 L28,237 Z" fill="#a0a0a0"/><path d="M28,230 L33,231.5 V238.5 L28,237 Z" fill="#e8e8e8"/><path d="M33,231.5 L38.5,230 V237 L33,238.5 Z" fill="#707070"/></g>
<use href="#fy" x="23" y="243" width="14" height="12"/>
<g><path d="M26.5,250 L32,247 L38.5,250 L33,253 Z" fill="#c8c8c8" stroke="#333" stroke-width="0.6"/><path d="M26.5,250 V252.5 L33,255.5 V253 Z" fill="#707070" stroke="#333" stroke-width="0.6"/><path d="M38.5,250 V252.5 L33,255.5 V253 Z" fill="#909090" stroke="#333" stroke-width="0.6"/><text x="25.5" y="249" font-size="6.5" font-weight="bold" font-family="Liberation Sans">t</text><path d="M23.5,250 V252 M23.5,254 V256" stroke="#c00" stroke-width="0.8"/></g>
<use href="#fy" x="23" y="261" width="14" height="12"/>
<g><path d="M31,263 V268 L26,272 M31,268 L36,271" stroke="#6a6ac8" stroke-width="1.3" fill="none"/><rect x="33" y="269" width="5.5" height="5" fill="#40b020" stroke="#207010" stroke-width="0.5"/><path d="M34,271 H37.5 M34,272.8 H37.5" stroke="#b0ff80" stroke-width="0.6"/></g>
<use href="#fy" x="23" y="279" width="14" height="12"/>
<g><rect x="28.5" y="281.5" width="10" height="7.5" rx="1" fill="#fff" stroke="#000" stroke-width="0.9"/><path d="M30.5,284 H36.5 M30.5,286.5 H36.5" stroke="#000" stroke-width="0.9"/><path d="M29,289 L26,292" stroke="#000" stroke-width="0.9"/></g>
<!-- splitter chevron -->
<path d="M511,626 L513.5,628.5 L516,626 M511,629 L513.5,631.5 L516,629" fill="none" stroke="#222" stroke-width="0.9"/>

<!-- VERTICAL TOOLBAR -->
<g fill="#222"><rect x="536" y="22" width="2" height="2"/><rect x="542" y="22" width="2" height="2"/><rect x="548" y="22" width="2" height="2"/><rect x="554" y="22" width="2" height="2"/></g>
<use href="#mesh" x="538" y="31" width="19" height="20"/>
<rect x="537.5" y="39.5" width="9" height="13" fill="#fff" stroke="#f03010" stroke-width="1"/>
<path d="M538.5,44 H546 M538.5,48 H546 M542,40 V52" stroke="#aaa" stroke-width="0.6"/>
<use href="#mesh" x="538" y="58" width="19" height="20"/>
<path d="M538,73 L549,71 L552,78 L538,79 Z" fill="#fff" stroke="#999" stroke-width="0.5"/>
<path d="M549,75 Q553,72 556,70 Q555,76 550,78 Z" fill="#ff1010"/>
<use href="#mesh" x="538" y="86" width="19" height="20"/>
<path d="M549,88 L556,86 V98 L549,101 Z" fill="#fff" stroke="#999" stroke-width="0.5"/>
<use href="#mesh" x="538" y="114" width="19" height="20"/>
<use href="#meshw" x="538" y="142" width="19" height="20"/>
<path d="M538,152 Q545,151 550,149 V160 Q545,161 538,162 Z" fill="#7a78c8"/>
<rect x="537.5" y="151.5" width="12" height="13" fill="none" stroke="#f03010" stroke-width="1"/>
<circle cx="547" cy="181.5" r="9.5" fill="none" stroke="#f04020" stroke-width="1"/>
<path d="M543,176 L555,173.5 V186.5 L543,190 Z" fill="#7a78c8" stroke="#202060" stroke-width="0.5"/>
<path d="M549,175 V188 M543,183 L555,180" stroke="#202060" stroke-width="0.6"/>
<g><path d="M538,210 L545,202 L549,206 L542,214 Z" fill="#101030"/><path d="M545,206 L552,199 L557,205 L550,212 Z" fill="#101030"/><ellipse cx="542" cy="214" rx="3.5" ry="3" fill="#3a8ae8" stroke="#000" stroke-width="0.8"/><ellipse cx="553.5" cy="208.5" rx="3.5" ry="3" fill="#3a8ae8" stroke="#000" stroke-width="0.8"/></g>
<circle cx="542" cy="233" r="4.8" fill="#1a1ab0"/><text x="542" y="236.5" font-size="7" font-weight="bold" font-family="Liberation Serif" fill="#fff" text-anchor="middle">i</text>
<text x="547" y="249.5" font-size="8.5" font-weight="bold" font-family="Liberation Sans" fill="#444" text-anchor="middle">123</text>
<g><path d="M537.5,270 V276 M537.5,274.5 L556,265.5 M556,262 V268" stroke="#3a3a7a" stroke-width="1.6" fill="none"/><text x="535.5" y="267" font-size="6.5" font-family="Liberation Sans" fill="#000">0</text><text x="554" y="262" font-size="6.5" font-family="Liberation Sans" fill="#000">1</text><text x="545.5" y="276" font-size="6.5" font-family="Liberation Sans" fill="#000">*10'</text></g>
<path d="M536,285.5 L545,284 V293.5 L536,295 Z" fill="#8a88d8" stroke="#303070" stroke-width="0.6"/><path d="M540.5,284.8 V294.3 M536,290.2 L545,288.7" stroke="#303070" stroke-width="0.6"/>
<text x="548" y="305" font-size="8.5" font-weight="bold" font-family="Liberation Sans" fill="#444" text-anchor="middle">ABC</text>
<defs><linearGradient id="gabc" x1="0" y1="0" x2="0" y2="1"><stop offset="0" stop-color="#ffe0a8"/><stop offset="1" stop-color="#ff9a50"/></linearGradient></defs>
<rect x="533.5" y="308.5" width="26" height="26" fill="url(#gabc)" stroke="#8a8a8a" stroke-width="1"/>
<path d="M538,311 V322" stroke="#e00000" stroke-width="1.6"/><path d="M535.5,319 L538,323 L540.5,319 Z" fill="#e00000"/><circle cx="538" cy="324.5" r="1.6" fill="#000"/>
<text x="548.5" y="332.5" font-size="8.5" font-weight="bold" font-family="Liberation Sans" fill="#555" text-anchor="middle">ABC</text>
<g><path d="M536,345 L548,342 V349 L536,351 Z" fill="#8a88d8" stroke="#303070" stroke-width="0.6"/><path d="M545,352 L557,349 V356 L545,358 Z" fill="#8a88d8" stroke="#303070" stroke-width="0.6"/><path d="M539,339 V345" stroke="#e00" stroke-width="1.4"/><path d="M537,343.5 L539,346.5 L541,343.5Z" fill="#e00"/><path d="M555,356 V361" stroke="#e00" stroke-width="1.4"/><path d="M553,359.5 L555,362.5 L557,359.5Z" fill="#e00"/><path d="M551,341 Q556,342 553,347" stroke="#999" stroke-width="1" fill="none"/></g>
<path d="M539,372 L555,367 L555,381 L539,385 Z" fill="#5a8ad8" stroke="#111" stroke-width="0.8"/>
<g fill="#fff" stroke="#222" stroke-width="0.8"><circle cx="539" cy="372.5" r="1.8"/><circle cx="555" cy="367" r="1.8"/><circle cx="555" cy="381" r="1.8"/><circle cx="539" cy="385.5" r="1.8"/></g>

<!-- TRIAD -->
<line x1="627.4" y1="711" x2="627.4" y2="677" stroke="#0000ff" stroke-width="1.3"/>
<path d="M627.4,656 L624,677 H631 Z" fill="none" stroke="#0000ff" stroke-width="1"/>
<line x1="627.4" y1="711" x2="598" y2="697" stroke="#00ff00" stroke-width="1" stroke-dasharray="1.5,1"/>
<path d="M582,688.5 L596,700 L600,694 Z" fill="none" stroke="#00ff00" stroke-width="1"/>
<line x1="627.4" y1="711" x2="657" y2="697" stroke="#ff0000" stroke-width="1" stroke-dasharray="1.5,1"/>
<path d="M672.7,688.5 L655,694 L659,700 Z" fill="none" stroke="#ff0000" stroke-width="1"/>
<g fill="#fff" font-size="12" font-family="Liberation Sans"><text x="626" y="644">Z</text><text x="572.5" y="683">Y</text><text x="681.5" y="683">X</text></g>
<!-- SCALE -->
<text x="1726.5" y="729.3" font-size="11" font-weight="bold" font-family="Liberation Sans" fill="#3a3a3a" letter-spacing="-0.4">300</text>
<path d="M1747.5,723.5 V729 H1898.5 V725" fill="none" stroke="#3a3a3a" stroke-width="1.6"/>

<!-- BOTTOM TOOLBAR -->
<g fill="#222"><rect x="536" y="740" width="2" height="2"/><rect x="536" y="746" width="2" height="2"/><rect x="536" y="752" width="2" height="2"/><rect x="536" y="758" width="2" height="2"/>
<rect x="587" y="740" width="2" height="2"/><rect x="587" y="746" width="2" height="2"/><rect x="587" y="752" width="2" height="2"/><rect x="587" y="758" width="2" height="2"/>
<rect x="900" y="740" width="2" height="2"/><rect x="900" y="746" width="2" height="2"/><rect x="900" y="752" width="2" height="2"/><rect x="900" y="758" width="2" height="2"/>
<rect x="1477" y="740" width="2" height="2"/><rect x="1477" y="746" width="2" height="2"/><rect x="1477" y="752" width="2" height="2"/><rect x="1477" y="758" width="2" height="2"/></g>
<path d="M547,744 Q556,744 566,738.5 V756 Q556,761 548,761 Z" fill="#8a8aa8" stroke="#5a5a7a" stroke-width="0.6"/>
<path d="M547.5,750 Q556,750 566,744.5 M547.5,755.5 Q556,755.5 566,750.5 M553,743.5 V761 M559,742 V759.5" stroke="#c8c8e8" stroke-width="0.7" fill="none"/>
<use href="#tri" x="572" y="750" width="5.5" height="3.5"/>
<use href="#fy" x="596" y="740" width="17.5" height="15.5"/>
<g transform="translate(597,747) scale(1.3)"><path d="M0,6 L3.5,4 L7,6 L3.5,8 Z" fill="#5050ff" stroke="#000090" stroke-width="0.5"/><path d="M0,6 V7.5 L3.5,9.5 V8 Z M7,6 V7.5 L3.5,9.5 V8Z" fill="#0000d0"/><path d="M4,2 L7.5,0 L11,2 L7.5,4 Z" fill="#40f040" stroke="#008000" stroke-width="0.5"/><path d="M4,2 V3.5 L7.5,5.5 V4 Z M11,2 V3.5 L7.5,5.5 V4Z" fill="#10b010"/><path d="M7.5,6.5 L11,4.5 L14.5,6.5 L11,8.5 Z" fill="#f8b040" stroke="#905000" stroke-width="0.5"/><path d="M7.5,6.5 V8 L11,10 V8.5 Z M14.5,6.5 V8 L11,10 V8.5Z" fill="#d08010"/></g>
<use href="#fy" x="624" y="740" width="17.5" height="15.5"/>
<use href="#bbox" x="628" y="748.5" width="17" height="12.5"/>
<use href="#fy" x="652" y="740" width="17.5" height="15.5"/>
<g fill="none"><path d="M659,760.5 V748 M659,760.5 H672.5" stroke="#000" stroke-width="1"/><path d="M659.5,759 Q659.5,748.5 665.5,748 Q670,748 672,751" stroke="#f00" stroke-width="1.1"/><path d="M663.5,750.5 H668.5 L667,754 L668.5,758 H663.5 L665,754 Z" fill="#c8c8c8" stroke="#666" stroke-width="0.6"/></g>
<use href="#fy" x="680" y="740" width="17.5" height="15.5"/>
<g><path d="M685,753 L693,749 L702,753.5 L694,757.5 Z" fill="#c8c8c8" stroke="#333" stroke-width="0.8"/><path d="M685,753 V756 L694,761 V757.5 Z" fill="#707070" stroke="#333" stroke-width="0.8"/><path d="M702,753.5 V756.5 L694,761 V757.5 Z" fill="#909090" stroke="#333" stroke-width="0.8"/><text x="684" y="749" font-size="7.5" font-weight="bold" font-family="Liberation Sans">t</text><path d="M682.5,752 V755 M681.5,755 H683.5 M682.5,757 V760 M681.5,757 H683.5" stroke="#c00" stroke-width="0.9"/></g>
<use href="#fy" x="708" y="740" width="17.5" height="15.5"/>
<path d="M718.5,742 V754" stroke="#e00000" stroke-width="2"/><path d="M714.5,751.5 L718.5,757.5 L722.5,751.5 Z" fill="#e00000"/><circle cx="718" cy="759.5" r="1.8" fill="#000"/>
<rect x="722.5" y="755" width="7" height="6" fill="#40b020" stroke="#207010" stroke-width="0.5"/><path d="M723.5,757 H728.5 M723.5,759 H728.5" stroke="#c0ff90" stroke-width="0.7"/>
<use href="#fy" x="736.5" y="740" width="17.5" height="15.5"/>
<path d="M745,746 V753 L739,758 M745,753 L751,756" stroke="#6a6ac8" stroke-width="1.6" fill="none"/>
<rect x="750.5" y="754" width="7" height="6.5" fill="#40b020" stroke="#207010" stroke-width="0.5"/><path d="M751.5,756 H756.5 M751.5,758.2 H756.5" stroke="#c0ff90" stroke-width="0.7"/>
<use href="#tri" x="762.5" y="750" width="5.5" height="3.5"/>
<rect x="775" y="742" width="1" height="16" fill="#999"/>
<path d="M788,745 L802,758 M802,745 L788,758" stroke="#e02828" stroke-width="4" stroke-linecap="round"/>
<path d="M788,745 L802,758 M802,745 L788,758" stroke="#ff6060" stroke-width="1.2" stroke-linecap="round" opacity="0.6"/>
<g fill="#b0b0b0" stroke="#555" stroke-width="0.8"><path d="M812,750 Q812,743 819,742 L826,741 V748 Q819,749 819,756 V758 L812,759 Z"/><path d="M817,752 Q817,745 824,744 L831,743 V750 Q824,751 824,758 V760 L817,761 Z"/><path d="M822,754 Q822,747 829,746 L834,745.5 V752 Q829,753 829,759 V760.5 L822,761 Z" fill="#c8c8c8"/></g>
<use href="#fy" x="840" y="741" width="15" height="13"/>
<use href="#fy" x="845" y="747" width="16.5" height="15"/>
<path d="M843,752 Q846,758 853,757" stroke="#e00" stroke-width="2" fill="none"/><path d="M851,754 L855.5,757 L851,760 Z" fill="#e00"/>
<g font-family="Liberation Sans" font-weight="bold" font-size="7" fill="#444"><text x="880" y="747.5">2</text><text x="877" y="754.5">1</text><text x="877" y="761.5">3</text></g>
<path d="M876,742.5 L871.5,746.5 M871,743.5 V747 H874.5" stroke="#e00" stroke-width="1" fill="none"/><path d="M884,752 L888,748 M888.5,751 V747.5 H885" stroke="#e00" stroke-width="1" fill="none"/>
<rect x="905.5" y="740" width="99" height="21" fill="#fff"/>
<rect x="989" y="741" width="15" height="19" fill="#f4f4f4"/>
<path d="M992.5,749 H1000.5 L996.5,753.5 Z" fill="#000"/>
<path d="M907.5,748 Q912,742 918,744 Q922,746 923,751 L920,753 Q919,749 915,749 Q911,749 909,753 Z" fill="#8a8ac8" stroke="#3a3a6a" stroke-width="0.6"/>
<defs><linearGradient id="rainbow" x1="0" x2="1"><stop offset="0" stop-color="#f00"/><stop offset="0.2" stop-color="#f0f"/><stop offset="0.4" stop-color="#00f"/><stop offset="0.6" stop-color="#0ff"/><stop offset="0.8" stop-color="#0f0"/><stop offset="1" stop-color="#ff0"/></linearGradient></defs>
<rect x="907.5" y="757.5" width="15" height="3" rx="1.2" fill="url(#rainbow)" stroke="#555" stroke-width="0.5"/>
<text x="926.5" y="755.5" font-size="12.5" font-family="Liberation Sans" fill="#111">Auto</text>
<path d="M1008,751 Q1012,744 1020,745 Q1027,747 1030,753 L1027,756 Q1024,751 1019,751 Q1014,751 1013,757 Z" fill="#fff" stroke="#333" stroke-width="0.8"/>
<use href="#tri" x="1034.5" y="749.5" width="5.5" height="3.5"/>
<path d="M1046,750 Q1050,743 1058,744 Q1065,746 1068,752 L1065,755 Q1062,750 1057,750 Q1052,750 1051,756 Z" fill="#7a7ab8" stroke="#333" stroke-width="0.8"/>
<use href="#tri" x="1072.5" y="749.5" width="5.5" height="3.5"/>
<g stroke="#222" stroke-width="0.8"><path d="M1084.5,746 L1094,741 L1105,746 L1095,751 Z" fill="#d0d0f0"/><path d="M1084.5,746 V757 L1095,762 V751 Z" fill="#8a8ac8"/><path d="M1105,746 V757 L1095,762 V751 Z" fill="#b0b0e0"/></g>
<rect x="1113" y="742" width="1" height="16" fill="#999"/>
<rect x="1118.5" y="740" width="105.5" height="21" fill="#fff"/>
<rect x="1207.5" y="741" width="16" height="19" fill="#f4f4f4"/>
<path d="M1211,749 H1219 L1215,753.5 Z" fill="#000"/>
<g stroke="#333" stroke-width="0.6"><path d="M1120,744.5 L1127.5,740.5 L1135,744.5 L1127.5,748.5 Z" fill="#a8a8e8"/><path d="M1120,744.5 V753 L1127.5,757 V748.5 Z" fill="#6a6ab8"/><path d="M1135,744.5 V753 L1127.5,757 V748.5 Z" fill="#8a8ad0"/><path d="M1123.8,742.5 L1131.2,746.5 M1131.2,742.5 L1123.8,746.5 M1120,749 L1127.5,753 L1135,749 M1123.8,746.5 V755 M1131.2,746.5 V755" fill="none"/></g>
<rect x="1120" y="757.5" width="16" height="3" rx="1.2" fill="url(#rainbow)" stroke="#555" stroke-width="0.5"/>
<text x="1140.5" y="755.5" font-size="12.5" font-family="Liberation Sans" fill="#111" letter-spacing="-0.3">By Comp</text>
<g stroke="#444" stroke-width="0.8" fill="#fff"><path d="M1226.5,745 L1237,740 L1248,745 L1237.5,750 Z"/><path d="M1226.5,745 V756 L1237.5,761 V750 Z"/><path d="M1248,745 V756 L1237.5,761 V750 Z"/><path d="M1231.8,742.5 L1242.8,747.5 M1242.3,742.5 L1232,747.5 M1226.5,750.5 L1237.5,755.5 L1248,750.5 M1232,747.5 V758.5 M1242.8,747.5 V758.5" fill="none"/></g>
<use href="#tri" x="1253.5" y="749.5" width="5.5" height="3.5"/>
<g stroke="#2a2a5a" stroke-width="0.8"><path d="M1264.5,745 L1275,740 L1286,745 L1275.5,750 Z" fill="#b0b0f0"/><path d="M1264.5,745 V756 L1275.5,761 V750 Z" fill="#7070c0"/><path d="M1286,745 V756 L1275.5,761 V750 Z" fill="#9090d8"/><path d="M1269.8,742.5 L1280.8,747.5 M1280.3,742.5 L1270,747.5 M1264.5,750.5 L1275.5,755.5 L1286,750.5 M1270,747.5 V758.5 M1280.8,747.5 V758.5" fill="none"/></g>
<use href="#tri" x="1291.5" y="749.5" width="5.5" height="3.5"/>
<line x1="1308.5" y1="754" x2="1320" y2="748" stroke="#333" stroke-width="1.6" stroke-linecap="round"/>
<use href="#tri" x="1330" y="749.5" width="5.5" height="3.5"/>
<path d="M1341,750 L1351.5,745 L1362,750 L1351.5,755 Z" fill="#8a8a8a" stroke="#555" stroke-width="0.6"/><path d="M1346,747.5 L1357,752.5 M1357,747.5 L1346,752.5" stroke="#ddd" stroke-width="0.7"/>
<use href="#tri" x="1367.5" y="749.5" width="5.5" height="3.5"/>
<path d="M1379.5,749 L1390,743 L1400.5,749 L1390,754.5 Z" fill="#a8b0ff" stroke="#222" stroke-width="0.7"/><path d="M1379.5,749 V751.5 L1390,757.5 V754.5 Z M1400.5,749 V751.5 L1390,757.5 V754.5Z" fill="#3a3ae0" stroke="#222" stroke-width="0.7"/>
<use href="#tri" x="1406" y="749.5" width="5.5" height="3.5"/>
<g fill="#7a7ac8" stroke="#404080" stroke-width="0.6"><rect x="1421" y="752" width="4.5" height="4"/><rect x="1421" y="756.5" width="4.5" height="3.5"/><rect x="1427" y="749" width="4.5" height="4"/><rect x="1427" y="754" width="4.5" height="3.5"/><rect x="1431" y="743" width="4.5" height="4"/><rect x="1431" y="748" width="4.5" height="4"/></g>
<defs><linearGradient id="mon" x1="0" y1="0" x2="1" y2="1"><stop offset="0" stop-color="#60a8f0"/><stop offset="1" stop-color="#1a5ab0"/></linearGradient></defs>
<rect x="1446" y="742" width="19.5" height="14" rx="1" fill="url(#mon)" stroke="#333" stroke-width="1.2"/>
<path d="M1453.5,756 V759 M1450,760 H1461" stroke="#333" stroke-width="1.6"/>
<defs><linearGradient id="star" x1="0" y1="0" x2="0" y2="1"><stop offset="0" stop-color="#fff060"/><stop offset="1" stop-color="#e09000"/></linearGradient></defs>
<path d="M1497,741.5 L1499.5,748.5 L1506.5,748.8 L1501,753.2 L1503,760.5 L1497,756.3 L1491,760.5 L1493,753.2 L1487.5,748.8 L1494.5,748.5 Z" fill="url(#star)" stroke="#b07000" stroke-width="0.8"/>
</svg>
<!-- /ICONS -->
</body></html>
